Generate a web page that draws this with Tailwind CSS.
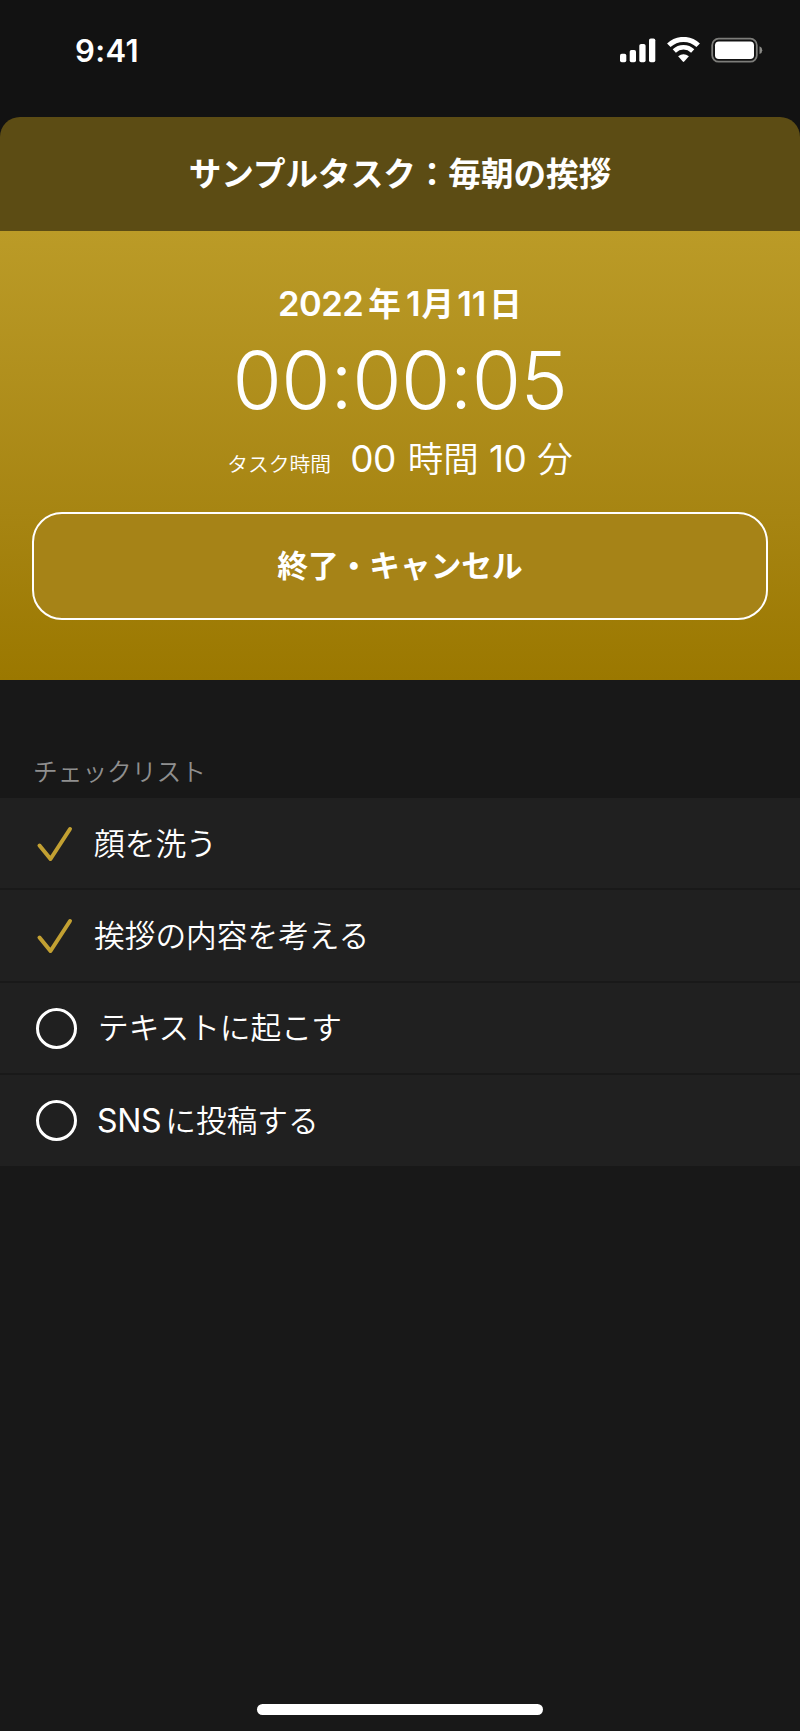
<!DOCTYPE html>
<html lang="ja">
<head>
<meta charset="utf-8">
<title>タスクタイマー</title>
<script src="https://cdn.jsdelivr.net/npm/@tailwindcss/browser@4"></script>
</head>
<body class="bg-[#181818]">
<div class="flex h-[1731px] w-[800px] flex-col overflow-hidden bg-[#181818] font-['Inter','Noto_Sans_CJK_JP',sans-serif] text-white">
  <div class="bg-[#121212]">
    <header class="flex h-[117px] items-start justify-between pl-[75px] pr-[37px] pt-[31px]">
      <span class="text-[31px] font-semibold leading-[40px] tracking-[0.400px]">9:41</span>
      <div class="flex items-start pt-[6px]">
        <svg class="h-[26px] w-[36px]" viewBox="0 0 36 26" fill="#fff"><rect x="0" y="16.700" width="6.300" height="8.500" rx="1.800"/><rect x="9.700" y="13" width="6.300" height="12.200" rx="1.800"/><rect x="19.300" y="7" width="6.300" height="18.200" rx="1.800"/><rect x="29" y="1.500" width="6.300" height="23.700" rx="1.800"/></svg>
        <svg class="ml-[11px] h-[26px] w-[33px]" viewBox="0 0 33 26" fill="none"><path d="M1.800 8.300A21.200 21.200 0 0 1 31.200 8.300" stroke="#fff" stroke-width="5"/><path d="M7.300 14A13.300 13.300 0 0 1 25.700 14" stroke="#fff" stroke-width="4.600"/><path d="M11.100 19.300Q16.500 15 21.900 19.300L17.200 24.600Q16.500 25.300 15.800 24.600Z" fill="#fff"/></svg>
        <svg class="ml-[11px] h-[27px] w-[52px]" viewBox="0 0 52 27" fill="none"><rect x="1.200" y="1.700" width="44.600" height="23" rx="6.500" stroke="#7d7d7a" stroke-width="1.800"/><rect x="4" y="4.500" width="39" height="17.500" rx="3.800" fill="#fff"/><path d="M48.500 9.300Q51.300 10.400 51.300 13.200T48.500 17.100Z" fill="#8a8a86"/></svg>
      </div>
    </header>
    <div class="flex h-[114px] items-center justify-center rounded-t-[20px] bg-[#5c4c14]">
      <h1 class="text-[32.6px] font-semibold leading-[40px]">サンプルタスク：毎朝の挨拶</h1>
    </div>
  </div>
  <section class="flex h-[449px] flex-col items-center bg-linear-to-b from-[#bb9b27] to-[#9b7800] px-8 pt-[51px]">
    <div class="flex h-[44px] items-center whitespace-nowrap text-[34.5px] font-semibold leading-[44px]"><span class="tracking-[-0.500px]">2022</span><span class="ml-[5px] text-[32.6px]">年</span><span class="ml-[5px]">1</span><span class="ml-px text-[32.6px]">月</span><span class="ml-[3px]">11</span><span class="ml-[3px] text-[32.6px]">日</span></div>
    <div class="mt-[7px] h-[94px] whitespace-nowrap text-[80px] font-light leading-[94px] tracking-[-0.600px]">00:00:05</div>
    <div class="mt-[6px] flex h-[52px] items-baseline whitespace-nowrap font-[350] leading-[52px]"><span class="text-[20.8px]">タスク時間</span><span class="ml-[19px] text-[37px] font-normal tracking-[-0.500px]">00</span><span class="ml-[12px] text-[35.5px]">時間</span><span class="ml-[10px] text-[37px] font-normal tracking-[-0.500px]">10</span><span class="ml-[11px] text-[35.5px]">分</span></div>
    <button class="mt-[27px] flex h-[108px] w-full items-center justify-center rounded-[30px] border-2 border-white bg-[#a68317] text-[30.7px] font-semibold">終了・キャンセル</button>
  </section>
  <section>
    <h2 class="h-[118px] pl-[33px] pt-[72px] text-[24.7px] font-[350] leading-[40px] text-[#8f8f8f]">チェックリスト</h2>
    <ul class="bg-[#202020] text-[30.7px] font-[350]">
      <li class="flex h-[92.300px] items-center border-b-2 border-[#191919] pl-[36px] pt-px">
        <svg class="h-[38px] w-[38px]" viewBox="0 0 38 38" fill="none" stroke="#c2a032" stroke-width="4" stroke-linecap="round" stroke-linejoin="round"><path d="M3.500 20.500L14.500 34L34 4"/></svg>
        <span class="ml-[20px]">顔を洗う</span></li>
      <li class="flex h-[92.300px] items-center border-b-2 border-[#191919] pl-[36px] pt-px">
        <svg class="h-[38px] w-[38px]" viewBox="0 0 38 38" fill="none" stroke="#c2a032" stroke-width="4" stroke-linecap="round" stroke-linejoin="round"><path d="M3.500 20.500L14.500 34L34 4"/></svg>
        <span class="ml-[20px]">挨拶の内容を考える</span></li>
      <li class="flex h-[92.300px] items-center border-b-2 border-[#191919] pl-[36px] pt-px">
        <span class="size-[41px] rounded-full border-[3.500px] border-white"></span>
        <span class="ml-[21px]">テキストに起こす</span></li>
      <li class="flex h-[91px] items-center pl-[36px] pt-px">
        <span class="size-[41px] rounded-full border-[3.500px] border-white"></span>
        <span class="ml-[20px] text-[32px] font-normal tracking-[-0.300px]">SNS</span><span class="ml-[4px]">に投稿する</span></li>
    </ul>
  </section>
  <div class="mx-auto mb-[16px] mt-auto h-[11px] w-[286px] rounded-full bg-white"></div>
</div>
</body>
</html>
